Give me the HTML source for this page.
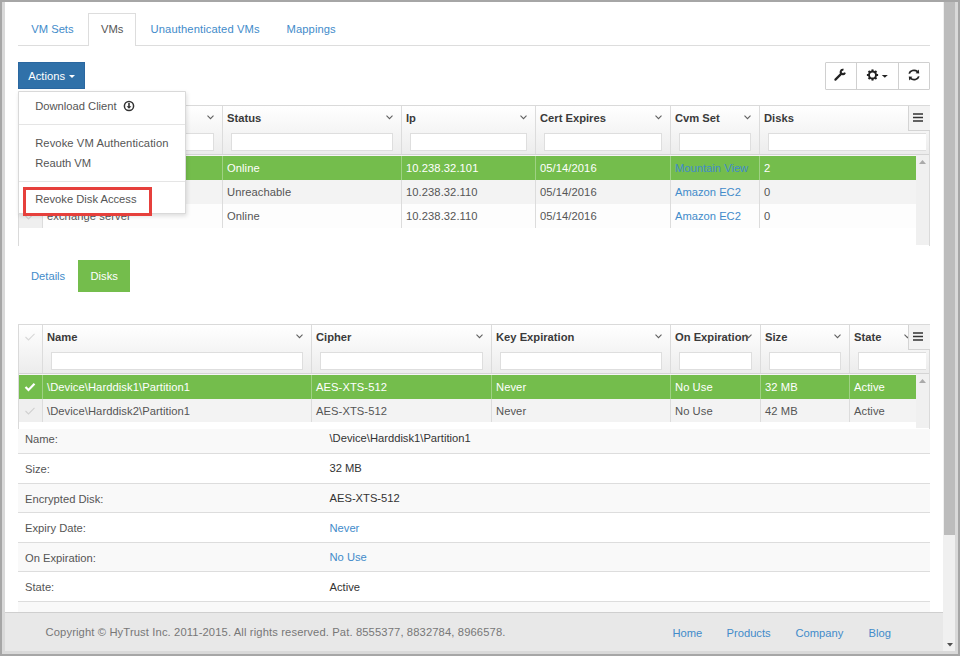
<!DOCTYPE html>
<html><head><meta charset="utf-8">
<style>
*{box-sizing:border-box;margin:0;padding:0}
html,body{width:960px;height:656px;overflow:hidden}
body{position:relative;background:#a6a6a6;font-family:"Liberation Sans",sans-serif;font-size:11.2px;color:#333}
.a{position:absolute}
.t{position:absolute;white-space:nowrap;line-height:14px}
.lk{color:#428bca}
.hd{font-weight:bold;color:#3a3a3a}
.rw{color:#555;letter-spacing:0.07px}
.sel{letter-spacing:0.07px}
.sel{color:#fff}
svg{position:absolute;overflow:visible}
</style></head><body>
<div class="a" style="left:2px;top:2px;width:956px;height:652px;background:#d9d9d9"></div>
<div class="a" style="left:5px;top:2px;width:938px;height:649px;background:#fff"></div>
<div class="a" style="left:943px;top:2px;width:12px;height:649px;background:#f0f0f0"></div>
<div class="a" style="left:944px;top:2px;width:11px;height:533px;background:#bcbcbc"></div>
<svg style="left:947px;top:643px" width="6" height="3.5"><path d="M0 0H6L3 3.5Z" fill="#505050"/></svg>
<div class="a" style="left:18px;top:45px;width:912px;height:1px;background:#ddd"></div>
<div class="a" style="left:88px;top:13px;width:48px;height:33px;background:#fff;border:1px solid #ddd;border-bottom:none"></div>
<div class="t lk" style="left:31.3px;top:22.10px;">VM Sets</div>
<div class="t " style="left:101px;top:22.10px;color:#555">VMs</div>
<div class="t lk" style="left:150.5px;top:22.10px;letter-spacing:0.12px">Unauthenticated VMs</div>
<div class="t lk" style="left:286.5px;top:22.10px;letter-spacing:0.1px">Mappings</div>
<div class="a" style="left:825px;top:62px;width:105px;height:28px;border:1px solid #d0d0d0;background:#fff;border-radius:1px"></div>
<div class="a" style="left:856px;top:62px;width:1px;height:28px;background:#d0d0d0"></div>
<div class="a" style="left:898px;top:62px;width:1px;height:28px;background:#d0d0d0"></div>
<svg style="left:830px;top:65px" width="20" height="20"><path d="M5.4 14.6L11.4 8.6" stroke="#222" stroke-width="2.2" stroke-linecap="round"/><path d="M13.47 4.78A2.2 2.2 0 1 0 14.97 7.65" fill="none" stroke="#222" stroke-width="2"/></svg>
<svg style="left:862px;top:65px" width="30" height="20"><rect x="14.10" y="9.00" width="2.0" height="2.0" transform="rotate(0 15.10 10.00)" fill="#222"/><rect x="12.75" y="12.25" width="2.0" height="2.0" transform="rotate(45 13.75 13.25)" fill="#222"/><rect x="9.50" y="13.60" width="2.0" height="2.0" transform="rotate(90 10.50 14.60)" fill="#222"/><rect x="6.25" y="12.25" width="2.0" height="2.0" transform="rotate(135 7.25 13.25)" fill="#222"/><rect x="4.90" y="9.00" width="2.0" height="2.0" transform="rotate(180 5.90 10.00)" fill="#222"/><rect x="6.25" y="5.75" width="2.0" height="2.0" transform="rotate(225 7.25 6.75)" fill="#222"/><rect x="9.50" y="4.40" width="2.0" height="2.0" transform="rotate(270 10.50 5.40)" fill="#222"/><rect x="12.75" y="5.75" width="2.0" height="2.0" transform="rotate(315 13.75 6.75)" fill="#222"/><circle cx="10.5" cy="10" r="3.5" fill="none" stroke="#222" stroke-width="1.9"/><path d="M19.8 10H25.8L22.8 12.8Z" fill="#222"/></svg>
<svg style="left:904px;top:65px" width="20" height="20"><path d="M5.2 8.6C6 5.4 10.5 4.2 13.6 6.6" fill="none" stroke="#222" stroke-width="1.8"/><path d="M11.6 8.2L15.2 8.4L14.8 4.6Z" fill="#222"/><path d="M14.8 11.4C14 14.6 9.5 15.8 6.4 13.4" fill="none" stroke="#222" stroke-width="1.8"/><path d="M8.4 11.8L4.8 11.6L5.2 15.4Z" fill="#222"/></svg>
<div class="a" style="left:18px;top:105px;width:912px;height:141px;border:1px solid #dadada;background:#fff;border-bottom:none"></div>
<div class="a" style="left:19px;top:106px;width:910px;height:48px;background:linear-gradient(#fff,#ececec)"></div>
<div class="a" style="left:19px;top:154px;width:910px;height:1px;background:#d4d4d4"></div>
<div class="a" style="left:19px;top:155px;width:910px;height:1px;background:#f6f6f6"></div>
<svg style="left:24px;top:113px" width="12" height="10"><path d="M1.5 5L4.5 8L10.5 1.8" fill="none" stroke="#d8d8d8" stroke-width="1.1"/></svg>
<div class="a" style="left:42px;top:106px;width:1px;height:48px;background:#dcdcdc"></div>
<div class="a" style="left:222px;top:106px;width:1px;height:48px;background:#dcdcdc"></div>
<div class="a" style="left:401px;top:106px;width:1px;height:48px;background:#dcdcdc"></div>
<div class="a" style="left:535px;top:106px;width:1px;height:48px;background:#dcdcdc"></div>
<div class="a" style="left:670px;top:106px;width:1px;height:48px;background:#dcdcdc"></div>
<div class="a" style="left:759px;top:106px;width:1px;height:48px;background:#dcdcdc"></div>
<div class="t hd" style="left:47px;top:111.10px;">Name</div>
<svg style="left:206.5px;top:114.8px" width="7" height="5"><path d="M0.5 0.6L3.5 3.7L6.5 0.6" fill="none" stroke="#606060" stroke-width="1.05"/></svg>
<div class="a" style="left:51px;top:133px;width:163px;height:18px;background:#fff;border:1px solid #dedede"></div>
<div class="t hd" style="left:227px;top:111.10px;">Status</div>
<svg style="left:385.5px;top:114.8px" width="7" height="5"><path d="M0.5 0.6L3.5 3.7L6.5 0.6" fill="none" stroke="#606060" stroke-width="1.05"/></svg>
<div class="a" style="left:231px;top:133px;width:162px;height:18px;background:#fff;border:1px solid #dedede"></div>
<div class="t hd" style="left:406px;top:111.10px;">Ip</div>
<svg style="left:519.5px;top:114.8px" width="7" height="5"><path d="M0.5 0.6L3.5 3.7L6.5 0.6" fill="none" stroke="#606060" stroke-width="1.05"/></svg>
<div class="a" style="left:410px;top:133px;width:117px;height:18px;background:#fff;border:1px solid #dedede"></div>
<div class="t hd" style="left:540px;top:111.10px;">Cert Expires</div>
<svg style="left:654.5px;top:114.8px" width="7" height="5"><path d="M0.5 0.6L3.5 3.7L6.5 0.6" fill="none" stroke="#606060" stroke-width="1.05"/></svg>
<div class="a" style="left:544px;top:133px;width:118px;height:18px;background:#fff;border:1px solid #dedede"></div>
<div class="t hd" style="left:675px;top:111.10px;">Cvm Set</div>
<svg style="left:743.5px;top:114.8px" width="7" height="5"><path d="M0.5 0.6L3.5 3.7L6.5 0.6" fill="none" stroke="#606060" stroke-width="1.05"/></svg>
<div class="a" style="left:679px;top:133px;width:72px;height:18px;background:#fff;border:1px solid #dedede"></div>
<div class="t hd" style="left:764px;top:111.10px;">Disks</div>
<svg style="left:914.5px;top:114.8px" width="7" height="5"><path d="M0.5 0.6L3.5 3.7L6.5 0.6" fill="none" stroke="#606060" stroke-width="1.05"/></svg>
<div class="a" style="left:768px;top:133px;width:158px;height:18px;background:#fff;border:1px solid #dedede;border-right:none"></div>
<div class="a" style="left:19px;top:156px;width:897px;height:24px;background:#74bd4c"></div>
<svg style="left:24px;top:163px" width="12" height="10"><path d="M1.5 5L4.5 8L10.5 1.8" fill="none" stroke="#fff" stroke-width="2.2"/></svg>
<div class="a" style="left:42px;top:156px;width:1px;height:24px;background:#9fd184"></div>
<div class="a" style="left:222px;top:156px;width:1px;height:24px;background:#9fd184"></div>
<div class="a" style="left:401px;top:156px;width:1px;height:24px;background:#9fd184"></div>
<div class="a" style="left:535px;top:156px;width:1px;height:24px;background:#9fd184"></div>
<div class="a" style="left:670px;top:156px;width:1px;height:24px;background:#9fd184"></div>
<div class="a" style="left:759px;top:156px;width:1px;height:24px;background:#9fd184"></div>
<div class="t sel" style="left:47px;top:160.90px;">vm-win2012</div>
<div class="t sel" style="left:227px;top:160.90px;">Online</div>
<div class="t sel" style="left:406px;top:160.90px;">10.238.32.101</div>
<div class="t sel" style="left:540px;top:160.90px;">05/14/2016</div>
<div class="t lk" style="left:675px;top:160.90px;">Mountain View</div>
<div class="t sel" style="left:764px;top:160.90px;">2</div>
<div class="a" style="left:19px;top:180px;width:897px;height:24px;background:#f3f3f3"></div>
<div class="a" style="left:19px;top:180px;width:23px;height:24px;background:#efefef"></div>
<svg style="left:24px;top:187px" width="12" height="10"><path d="M1.5 5L4.5 8L10.5 1.8" fill="none" stroke="#d0d0d0" stroke-width="1.1"/></svg>
<div class="a" style="left:42px;top:180px;width:1px;height:24px;background:#dcdcdc"></div>
<div class="a" style="left:222px;top:180px;width:1px;height:24px;background:#dcdcdc"></div>
<div class="a" style="left:401px;top:180px;width:1px;height:24px;background:#dcdcdc"></div>
<div class="a" style="left:535px;top:180px;width:1px;height:24px;background:#dcdcdc"></div>
<div class="a" style="left:670px;top:180px;width:1px;height:24px;background:#dcdcdc"></div>
<div class="a" style="left:759px;top:180px;width:1px;height:24px;background:#dcdcdc"></div>
<div class="t rw" style="left:47px;top:184.90px;">exchange server</div>
<div class="t rw" style="left:227px;top:184.90px;">Unreachable</div>
<div class="t rw" style="left:406px;top:184.90px;">10.238.32.110</div>
<div class="t rw" style="left:540px;top:184.90px;">05/14/2016</div>
<div class="t lk" style="left:675px;top:184.90px;">Amazon EC2</div>
<div class="t rw" style="left:764px;top:184.90px;">0</div>
<div class="a" style="left:19px;top:204px;width:897px;height:24px;background:#fdfdfd"></div>
<div class="a" style="left:19px;top:204px;width:23px;height:24px;background:#efefef"></div>
<svg style="left:24px;top:211px" width="12" height="10"><path d="M1.5 5L4.5 8L10.5 1.8" fill="none" stroke="#d0d0d0" stroke-width="1.1"/></svg>
<div class="a" style="left:42px;top:204px;width:1px;height:24px;background:#dcdcdc"></div>
<div class="a" style="left:222px;top:204px;width:1px;height:24px;background:#dcdcdc"></div>
<div class="a" style="left:401px;top:204px;width:1px;height:24px;background:#dcdcdc"></div>
<div class="a" style="left:535px;top:204px;width:1px;height:24px;background:#dcdcdc"></div>
<div class="a" style="left:670px;top:204px;width:1px;height:24px;background:#dcdcdc"></div>
<div class="a" style="left:759px;top:204px;width:1px;height:24px;background:#dcdcdc"></div>
<div class="t rw" style="left:47px;top:208.90px;">exchange server</div>
<div class="t rw" style="left:227px;top:208.90px;">Online</div>
<div class="t rw" style="left:406px;top:208.90px;">10.238.32.110</div>
<div class="t rw" style="left:540px;top:208.90px;">05/14/2016</div>
<div class="t lk" style="left:675px;top:208.90px;">Amazon EC2</div>
<div class="t rw" style="left:764px;top:208.90px;">0</div>
<div class="a" style="left:916px;top:155px;width:13px;height:90px;background:#f0f0f0"></div>
<svg style="left:919px;top:160px" width="7" height="4"><path d="M0 4H7L3.5 0Z" fill="#aaa"/></svg>
<div class="a" style="left:908px;top:106px;width:22px;height:25px;background:#f3f3f3;border:1px solid #d4d4d4;border-top:none;border-right:none"></div>
<svg style="left:912.5px;top:113px" width="10" height="9"><path d="M0 1H10M0 4.5H10M0 8H10" stroke="#333" stroke-width="1.3"/></svg>
<div class="t lk" style="left:31px;top:268.90px;">Details</div>
<div class="a" style="left:78px;top:260px;width:52px;height:32px;background:#74bd4c"></div>
<div class="t " style="left:90.5px;top:268.90px;color:#fff">Disks</div>
<div class="a" style="left:18px;top:324px;width:912px;height:105px;border:1px solid #dadada;background:#fff;border-bottom:none"></div>
<div class="a" style="left:19px;top:325px;width:910px;height:48px;background:linear-gradient(#fff,#ececec)"></div>
<div class="a" style="left:19px;top:373px;width:910px;height:1px;background:#d4d4d4"></div>
<div class="a" style="left:19px;top:374px;width:910px;height:1px;background:#f6f6f6"></div>
<svg style="left:24px;top:332px" width="12" height="10"><path d="M1.5 5L4.5 8L10.5 1.8" fill="none" stroke="#d8d8d8" stroke-width="1.1"/></svg>
<div class="a" style="left:42px;top:325px;width:1px;height:48px;background:#dcdcdc"></div>
<div class="a" style="left:311px;top:325px;width:1px;height:48px;background:#dcdcdc"></div>
<div class="a" style="left:491px;top:325px;width:1px;height:48px;background:#dcdcdc"></div>
<div class="a" style="left:670px;top:325px;width:1px;height:48px;background:#dcdcdc"></div>
<div class="a" style="left:760px;top:325px;width:1px;height:48px;background:#dcdcdc"></div>
<div class="a" style="left:849px;top:325px;width:1px;height:48px;background:#dcdcdc"></div>
<div class="t hd" style="left:47px;top:330.10px;">Name</div>
<svg style="left:295.5px;top:333.8px" width="7" height="5"><path d="M0.5 0.6L3.5 3.7L6.5 0.6" fill="none" stroke="#606060" stroke-width="1.05"/></svg>
<div class="a" style="left:51px;top:352px;width:252px;height:18px;background:#fff;border:1px solid #dedede"></div>
<div class="t hd" style="left:316px;top:330.10px;">Cipher</div>
<svg style="left:475.5px;top:333.8px" width="7" height="5"><path d="M0.5 0.6L3.5 3.7L6.5 0.6" fill="none" stroke="#606060" stroke-width="1.05"/></svg>
<div class="a" style="left:320px;top:352px;width:163px;height:18px;background:#fff;border:1px solid #dedede"></div>
<div class="t hd" style="left:496px;top:330.10px;">Key Expiration</div>
<svg style="left:654.5px;top:333.8px" width="7" height="5"><path d="M0.5 0.6L3.5 3.7L6.5 0.6" fill="none" stroke="#606060" stroke-width="1.05"/></svg>
<div class="a" style="left:500px;top:352px;width:162px;height:18px;background:#fff;border:1px solid #dedede"></div>
<div class="t hd" style="left:675px;top:330.10px;">On Expiration</div>
<svg style="left:744.5px;top:333.8px" width="7" height="5"><path d="M0.5 0.6L3.5 3.7L6.5 0.6" fill="none" stroke="#606060" stroke-width="1.05"/></svg>
<div class="a" style="left:679px;top:352px;width:73px;height:18px;background:#fff;border:1px solid #dedede"></div>
<div class="t hd" style="left:765px;top:330.10px;">Size</div>
<svg style="left:833.5px;top:333.8px" width="7" height="5"><path d="M0.5 0.6L3.5 3.7L6.5 0.6" fill="none" stroke="#606060" stroke-width="1.05"/></svg>
<div class="a" style="left:769px;top:352px;width:72px;height:18px;background:#fff;border:1px solid #dedede"></div>
<div class="t hd" style="left:854px;top:330.10px;">State</div>
<svg style="left:903.5px;top:333.8px" width="7" height="5"><path d="M0.5 0.6L3.5 3.7L6.5 0.6" fill="none" stroke="#606060" stroke-width="1.05"/></svg>
<div class="a" style="left:858px;top:352px;width:68px;height:18px;background:#fff;border:1px solid #dedede;border-right:none"></div>
<div class="a" style="left:19px;top:375px;width:897px;height:24px;background:#74bd4c"></div>
<svg style="left:24px;top:382px" width="12" height="10"><path d="M1.5 5L4.5 8L10.5 1.8" fill="none" stroke="#fff" stroke-width="2.2"/></svg>
<div class="a" style="left:42px;top:375px;width:1px;height:24px;background:#9fd184"></div>
<div class="a" style="left:311px;top:375px;width:1px;height:24px;background:#9fd184"></div>
<div class="a" style="left:491px;top:375px;width:1px;height:24px;background:#9fd184"></div>
<div class="a" style="left:670px;top:375px;width:1px;height:24px;background:#9fd184"></div>
<div class="a" style="left:760px;top:375px;width:1px;height:24px;background:#9fd184"></div>
<div class="a" style="left:849px;top:375px;width:1px;height:24px;background:#9fd184"></div>
<div class="t sel" style="left:47px;top:379.90px;">\Device\Harddisk1\Partition1</div>
<div class="t sel" style="left:316px;top:379.90px;">AES-XTS-512</div>
<div class="t sel" style="left:496px;top:379.90px;">Never</div>
<div class="t sel" style="left:675px;top:379.90px;">No Use</div>
<div class="t sel" style="left:765px;top:379.90px;">32 MB</div>
<div class="t sel" style="left:854px;top:379.90px;">Active</div>
<div class="a" style="left:19px;top:399px;width:897px;height:23px;background:#f3f3f3"></div>
<div class="a" style="left:19px;top:399px;width:23px;height:23px;background:#efefef"></div>
<svg style="left:24px;top:406px" width="12" height="10"><path d="M1.5 5L4.5 8L10.5 1.8" fill="none" stroke="#d0d0d0" stroke-width="1.1"/></svg>
<div class="a" style="left:42px;top:399px;width:1px;height:23px;background:#dcdcdc"></div>
<div class="a" style="left:311px;top:399px;width:1px;height:23px;background:#dcdcdc"></div>
<div class="a" style="left:491px;top:399px;width:1px;height:23px;background:#dcdcdc"></div>
<div class="a" style="left:670px;top:399px;width:1px;height:23px;background:#dcdcdc"></div>
<div class="a" style="left:760px;top:399px;width:1px;height:23px;background:#dcdcdc"></div>
<div class="a" style="left:849px;top:399px;width:1px;height:23px;background:#dcdcdc"></div>
<div class="t rw" style="left:47px;top:403.90px;">\Device\Harddisk2\Partition1</div>
<div class="t rw" style="left:316px;top:403.90px;">AES-XTS-512</div>
<div class="t rw" style="left:496px;top:403.90px;">Never</div>
<div class="t rw" style="left:675px;top:403.90px;">No Use</div>
<div class="t rw" style="left:765px;top:403.90px;">42 MB</div>
<div class="t rw" style="left:854px;top:403.90px;">Active</div>
<div class="a" style="left:916px;top:374px;width:13px;height:54px;background:#f0f0f0"></div>
<svg style="left:919px;top:379px" width="7" height="4"><path d="M0 4H7L3.5 0Z" fill="#aaa"/></svg>
<div class="a" style="left:908px;top:325px;width:22px;height:25px;background:#f3f3f3;border:1px solid #d4d4d4;border-top:none;border-right:none"></div>
<svg style="left:912.5px;top:332px" width="10" height="9"><path d="M0 1H10M0 4.5H10M0 8H10" stroke="#333" stroke-width="1.3"/></svg>
<div class="a" style="left:18px;top:429px;width:912px;height:25px;background:#f9f9f9;border-bottom:1px solid #ddd"></div>
<div class="t " style="left:25px;top:431.90px;color:#555">Name:</div>
<div class="t " style="left:329.5px;top:431.40px;color:#333">\Device\Harddisk1\Partition1</div>
<div class="a" style="left:18px;top:454px;width:912px;height:30px;background:#fff;border-bottom:1px solid #ddd"></div>
<div class="t " style="left:25px;top:461.90px;color:#555">Size:</div>
<div class="t " style="left:329.5px;top:461.40px;color:#333">32 MB</div>
<div class="a" style="left:18px;top:484px;width:912px;height:29px;background:#f9f9f9;border-bottom:1px solid #ddd"></div>
<div class="t " style="left:25px;top:491.50px;color:#555">Encrypted Disk:</div>
<div class="t " style="left:329.5px;top:491.00px;color:#333">AES-XTS-512</div>
<div class="a" style="left:18px;top:513px;width:912px;height:30px;background:#fff;border-bottom:1px solid #ddd"></div>
<div class="t " style="left:25px;top:521.10px;color:#555">Expiry Date:</div>
<div class="t lk" style="left:329.5px;top:520.60px;">Never</div>
<div class="a" style="left:18px;top:543px;width:912px;height:29px;background:#f9f9f9;border-bottom:1px solid #ddd"></div>
<div class="t " style="left:25px;top:550.70px;color:#555">On Expiration:</div>
<div class="t lk" style="left:329.5px;top:550.20px;">No Use</div>
<div class="a" style="left:18px;top:572px;width:912px;height:30px;background:#fff;border-bottom:1px solid #ddd"></div>
<div class="t " style="left:25px;top:580.10px;color:#555">State:</div>
<div class="t " style="left:329.5px;top:579.60px;color:#333">Active</div>
<div class="a" style="left:18px;top:602px;width:912px;height:10px;background:#f9f9f9"></div>
<div class="a" style="left:5px;top:612px;width:938px;height:39px;background:#e8e8e8;border-top:1px solid #cfcfcf"></div>
<div class="t " style="left:45.5px;top:625.30px;color:#777;letter-spacing:0.13px">Copyright © HyTrust Inc. 2011-2015. All rights reserved. Pat. 8555377, 8832784, 8966578.</div>
<div class="t lk" style="left:672.5px;top:626.10px;">Home</div>
<div class="t lk" style="left:726.5px;top:626.10px;">Products</div>
<div class="t lk" style="left:795.5px;top:626.10px;">Company</div>
<div class="t lk" style="left:868.5px;top:626.10px;">Blog</div>
<div class="a" style="left:18px;top:62px;width:67px;height:27px;background:#3071a9;border:1px solid #2a67a0"></div>
<div class="t " style="left:28.3px;top:68.90px;color:#fff">Actions</div>
<svg style="left:69px;top:75px" width="6" height="3"><path d="M0 0H6L3 3Z" fill="#fff"/></svg>
<div class="a" style="left:18px;top:91px;width:168px;height:123px;background:#fff;border:1px solid rgba(0,0,0,.15);border-radius:1px;box-shadow:1px 2px 4px rgba(0,0,0,.13)"></div>
<div class="t " style="left:35.2px;top:99.40px;color:#555">Download Client</div>
<svg style="left:123px;top:100px" width="12" height="12"><circle cx="6" cy="6" r="4.6" fill="none" stroke="#333" stroke-width="1.5"/><path d="M6 3V7.5" stroke="#333" stroke-width="1.6"/><path d="M3.6 6.3H8.4L6 8.8Z" fill="#333"/></svg>
<div class="a" style="left:19px;top:124px;width:166px;height:1px;background:#e5e5e5"></div>
<div class="t " style="left:35.2px;top:136.00px;color:#555;letter-spacing:0.09px">Revoke VM Authentication</div>
<div class="t " style="left:35.2px;top:156.30px;color:#555">Reauth VM</div>
<div class="a" style="left:19px;top:181px;width:166px;height:1px;background:#e5e5e5"></div>
<div class="t " style="left:35.2px;top:192.10px;color:#555">Revoke Disk Access</div>
<div class="a" style="left:23px;top:187px;width:129px;height:29px;border:3px solid #e6403c"></div>
</body></html>
